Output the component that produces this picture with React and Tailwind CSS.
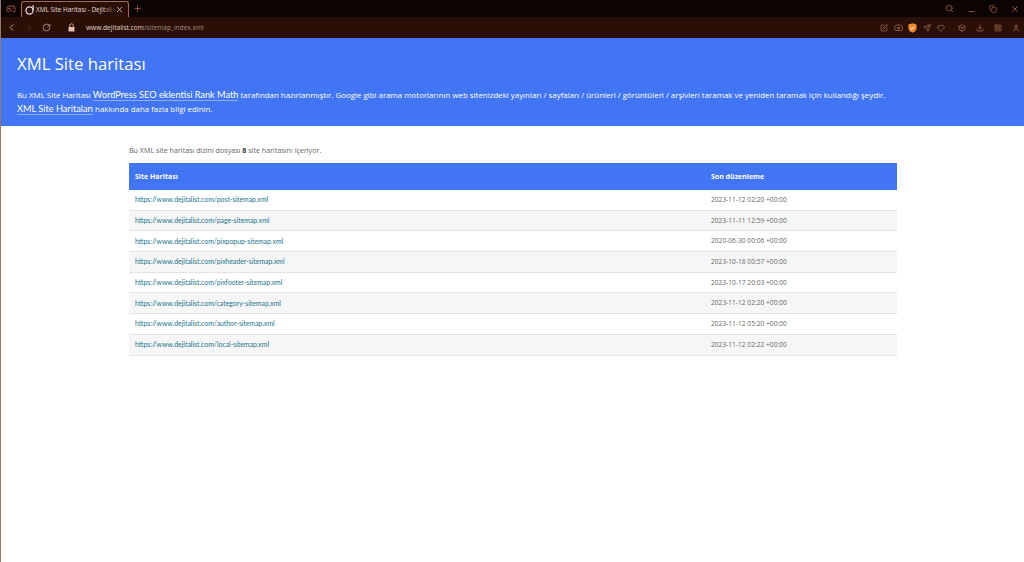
import React from 'react';
import { ChevronLeft, ChevronRight, RotateCw, Plus, X, Search, Minus, Copy, Camera, Send, Heart, Box, Download, User, SquareMenu, SquarePen, Gamepad2 } from 'lucide-react';

const sitemaps = [
  ['post-sitemap.xml', '2023-11-12 02:20 +00:00'],
  ['page-sitemap.xml', '2023-11-11 12:59 +00:00'],
  ['pixpopup-sitemap.xml', '2020-06-30 00:06 +00:00'],
  ['pixheader-sitemap.xml', '2023-10-18 00:57 +00:00'],
  ['pixfooter-sitemap.xml', '2023-10-17 20:03 +00:00'],
  ['category-sitemap.xml', '2023-11-12 02:20 +00:00'],
  ['author-sitemap.xml', '2023-11-12 05:20 +00:00'],
  ['local-sitemap.xml', '2023-11-12 02:22 +00:00'],
];

function BrowserBar() {
  return (
    <div className="font-['Open_Sans',sans-serif]">
      {/* Tabs */}
      <div className="h-[17px] bg-[#0c0403] flex items-end">
        <div className="w-[20px] h-full flex items-center justify-center">
          <Gamepad2 size={10} className="text-[#a5614c]" />
        </div>
        <div className="w-[108px] h-[16px] bg-[#2a0f06] border border-b-0 border-[#a8684a] rounded-t-[3px] flex items-center pl-[3px] pr-[4px]">
          <svg width="10" height="11" viewBox="0 0 10 11" className="shrink-0" fill="none" stroke="#e8e0dc" strokeWidth="1.2">
            <circle cx="4.5" cy="6.5" r="3.6" />
            <path d="M8.1 6.5V1" />
          </svg>
          <span className="ml-[1px] text-[6.4px] text-[#e8dcd6] whitespace-nowrap flex-1">
            XML Site Haritası - Dejit<span className="opacity-50">ali</span>
          </span>
          <X size={9} className="text-[#e8dcd6] shrink-0" />
        </div>
        <div className="w-[16px] h-full flex items-center justify-center">
          <Plus size={9} className="text-[#b4614a]" />
        </div>
        <div className="ml-auto flex items-center h-full gap-[13px] pr-[4px] text-[#a5614c]">
          <Search size={9} />
          <Minus size={9} className="mt-[6px]" />
          <Copy size={8} />
          <X size={10} />
        </div>
      </div>
      {/* Toolbar */}
      <div className="h-[21px] bg-[#2a0f06] flex items-center pl-[5px] pr-[4px]">
        <ChevronLeft size={11} className="text-[#c9a99c]" />
        <ChevronRight size={11} className="text-[#5c3a2c] ml-[7px]" />
        <RotateCw size={9} className="text-[#c9a99c] ml-[7px]" />
        <svg width="7" height="9" viewBox="0 0 7 9" className="ml-[17px]">
          <path d="M1.7 4V2.6a1.8 1.8 0 0 1 3.6 0V4" fill="none" stroke="#e3bfae" strokeWidth="0.9" />
          <rect x="0.5" y="4" width="6" height="4.5" rx="0.6" fill="#e3bfae" />
        </svg>
        <span className="ml-[11px] text-[6.6px] text-[#a58a7d] whitespace-nowrap">
          <span className="text-[#e0d2ca]">www.dejitalist.com</span>/sitemap_index.xml
        </span>
        <div className="ml-auto flex items-center text-[#a5715c]">
          <SquarePen size={8} />
          <Camera size={9} className="ml-[6px]" />
          <svg width="9" height="10" viewBox="0 0 9 10" className="ml-[5px]">
            <path d="M4.5 0.3 8.6 1.5V5c0 2.4-2 4-4.1 4.7C2.4 9 .4 7.4.4 5V1.5Z" fill="#f08a2c" />
            <path d="M2.6 4.8 4 6.2 6.5 3.6" fill="none" stroke="#fff" strokeWidth="0.9" />
          </svg>
          <Send size={8} className="ml-[6px]" />
          <Heart size={8} className="ml-[6px]" />
          <Box size={8} className="ml-[13px]" />
          <Download size={8} className="ml-[10px]" />
          <SquareMenu size={8} className="ml-[10px]" />
          <User size={8} className="ml-[10px]" />
        </div>
      </div>
    </div>
  );
}

export default function App() {
  return (
    <div className="h-[562px] bg-white border-l border-[#8f7a6e] overflow-hidden font-['Open_Sans',sans-serif]">
      <BrowserBar />

      {/* Header */}
      <div className="h-[88px] bg-[#4275f4] text-white pl-[16px] pr-[16px] pt-[15px]">
        <h1 className="text-[16.7px] leading-[22px] font-normal">XML Site haritası</h1>
        <p className="mt-[13px] text-[7.9px] leading-[14px] whitespace-nowrap">
          Bu XML Site Haritası <a className="font-['Lato',sans-serif] text-[9.2px] border-b border-white/40">WordPress SEO eklentisi Rank Math</a> tarafından hazırlanmıştır. Google gibi arama motorlarının web sitenizdeki yayınları / sayfaları / ürünleri / görüntüleri / arşivleri taramak ve yeniden taramak için kullandığı şeydir.
        </p>
        <p className="text-[7.9px] leading-[13px] whitespace-nowrap">
          <a className="font-['Lato',sans-serif] text-[9.2px] border-b border-white/40">XML Site Haritaları</a> hakkında daha fazla bilgi edinin.
        </p>
      </div>

      {/* Table */}
      <div className="w-[768px] ml-[128px] pt-[19px]">
        <p className="text-[7.15px] leading-[10px] text-[#666666]">
          Bu XML site haritası dizini dosyası <b className="text-[#333333]">8</b> site haritasını içeriyor.
        </p>
        <div className="mt-[8px] text-[7px] leading-[10px]">
          <div className="h-[27px] bg-[#4275f4] text-white font-bold flex items-center">
            <div className="pl-[6px] flex-1">Site Haritası</div>
            <div className="w-[186px]">Son düzenleme</div>
          </div>
          {sitemaps.map(([file, date], idx) => (
            <div key={file} className={`h-[20.7px] border-b border-[#e4e4e4] flex items-center ${idx % 2 ? 'bg-[#f6f6f6]' : 'bg-white'}`}>
              <div className="pl-[6px] flex-1 text-[6.85px]">
                <a className="font-['Lato',sans-serif] text-[#22748c]">https://www.dejitalist.com/{file}</a>
              </div>
              <div className="w-[186px] text-[6.65px] text-[#666666]">{date}</div>
            </div>
          ))}
        </div>
      </div>
    </div>
  );
}
